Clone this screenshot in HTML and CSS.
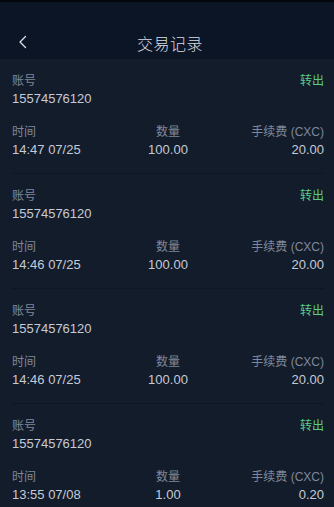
FILE: index.html
```html
<!DOCTYPE html>
<html lang="zh-CN">
<head>
    <meta charset="UTF-8">
    <meta name="viewport" content="width=device-width, initial-scale=1.0">
    <title>交易记录</title>
    <link rel="stylesheet" href="styles.css">
</head>
<body>

    <!-- Header -->
    <header class="header">
        <div class="nav-bar">
            <button class="back-btn" aria-label="返回">
                <svg width="10" height="14" viewBox="0 0 10 14">
                    <path d="M7.5 1.5 L2 7 L7.5 12.5" fill="none" stroke="#dde2ea" stroke-width="1.3" stroke-linecap="round" stroke-linejoin="round"/>
                </svg>
            </button>
            <h1>交易记录</h1>
        </div>
    </header>

    <!-- Records -->
    <div class="records">
        <div class="record">
            <div class="row">
                <span class="label">账号</span>
                <span class="type">转出</span>
            </div>
            <div class="value">15574576120</div>
            <div class="grid">
                <span class="label">时间</span>
                <span class="label center">数量</span>
                <span class="label right">手续费 (CXC)</span>
                <span class="value">14:47 07/25</span>
                <span class="value center">100.00</span>
                <span class="value right">20.00</span>
            </div>
        </div>

        <div class="record">
            <div class="row">
                <span class="label">账号</span>
                <span class="type">转出</span>
            </div>
            <div class="value">15574576120</div>
            <div class="grid">
                <span class="label">时间</span>
                <span class="label center">数量</span>
                <span class="label right">手续费 (CXC)</span>
                <span class="value">14:46 07/25</span>
                <span class="value center">100.00</span>
                <span class="value right">20.00</span>
            </div>
        </div>

        <div class="record">
            <div class="row">
                <span class="label">账号</span>
                <span class="type">转出</span>
            </div>
            <div class="value">15574576120</div>
            <div class="grid">
                <span class="label">时间</span>
                <span class="label center">数量</span>
                <span class="label right">手续费 (CXC)</span>
                <span class="value">14:46 07/25</span>
                <span class="value center">100.00</span>
                <span class="value right">20.00</span>
            </div>
        </div>

        <div class="record">
            <div class="row">
                <span class="label">账号</span>
                <span class="type">转出</span>
            </div>
            <div class="value">15574576120</div>
            <div class="grid">
                <span class="label">时间</span>
                <span class="label center">数量</span>
                <span class="label right">手续费 (CXC)</span>
                <span class="value">13:55 07/08</span>
                <span class="value center">1.00</span>
                <span class="value right">0.20</span>
            </div>
        </div>
    </div>

</body>
</html>
```

FILE: styles.css
```css
body {
    font-family: "Liberation Sans", "Noto Sans CJK SC", sans-serif;
    background: #131c2b;
    color: #c5cbd6;
    margin: 0;
    padding: 0;
}

/* Header */
.header {
    background: #0b1526;
    border-top: 2px solid #04070c;
    padding-top: 24px;
}

.nav-bar {
    height: 33px;
    display: flex;
    align-items: center;
    justify-content: center;
    position: relative;
}

.nav-bar h1 {
    margin: 0 0 0 6px;
    font-size: 16px;
    font-weight: 300;
    color: #d9dee6;
    letter-spacing: 0.5px;
}

.back-btn {
    position: absolute;
    left: 18px;
    top: 9px;
    background: none;
    border: none;
    padding: 0;
    display: flex;
}

/* Records */
.record {
    margin: 0 10px 0 12px;
    padding: 14px 0 15px;
    border-bottom: 1px solid #0e1623;
}

.row {
    display: flex;
    justify-content: space-between;
}

.label {
    font-size: 12px;
    line-height: 17px;
    color: #7f8899;
}

.type {
    font-size: 12px;
    line-height: 17px;
    color: #5bcb87;
}

.value {
    font-size: 13px;
    line-height: 17px;
    color: #c5cbd6;
}

.grid {
    display: grid;
    grid-template-columns: 1fr 1fr 1fr;
    margin-top: 17px;
}

.center {
    text-align: center;
}

.right {
    text-align: right;
}
```
